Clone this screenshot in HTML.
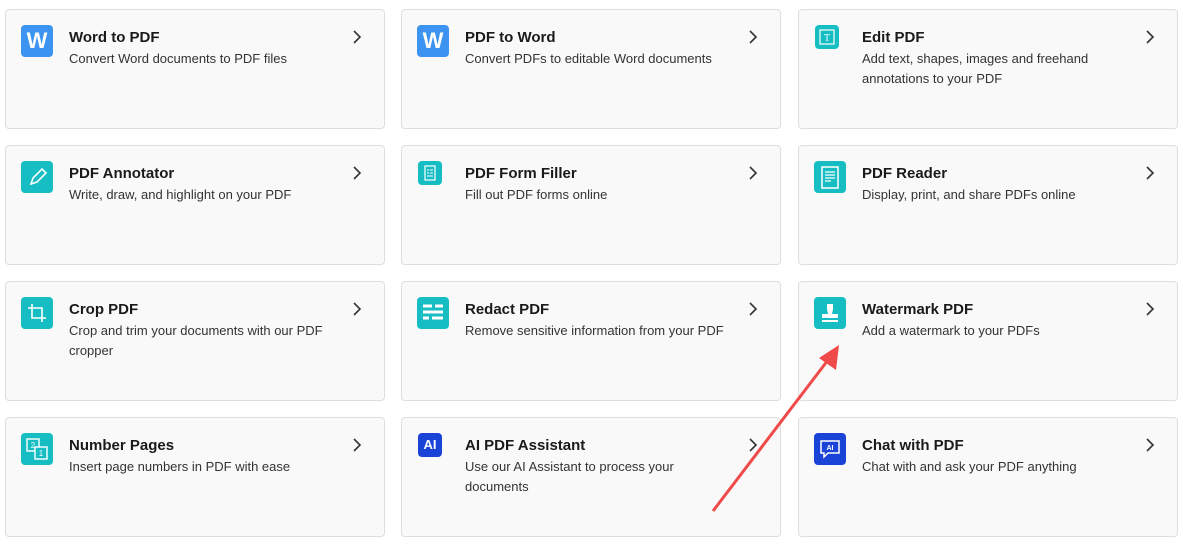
<!DOCTYPE html>
<html><head><meta charset="utf-8"><style>
*{box-sizing:border-box;margin:0;padding:0}
body{width:1192px;height:546px;background:#fff;font-family:"Liberation Sans",sans-serif;position:relative;overflow:hidden}
.card{position:absolute;width:380px;height:120px;background:#f9f9f9;border:1px solid #dedede;border-radius:4px}
.ic{position:absolute;left:15px;top:15px;width:32px;height:32px;border-radius:4px;background:#16bec3}
.t{position:absolute;left:63px;top:19px;font-size:15px;font-weight:bold;color:#1a1a1a}
.d{position:absolute;left:63px;top:39px;font-size:13px;line-height:20px;color:#333;width:270px}
.ch{position:absolute;right:22px;top:20px}
.w{background:#3d94f0;color:#fff;font-weight:bold;font-size:22px;text-align:center;line-height:32px}
</style></head><body>
<svg width="0" height="0" style="position:absolute"><defs><symbol id="chev" viewBox="0 0 10 14"><path d="M2 1l6 6-6 6" fill="none" stroke="#333" stroke-width="1.6"/></symbol></defs></svg>

<div class="card" style="left:5px;top:9px"><div class="ic w">W</div><div class="t">Word to PDF</div><div class="d">Convert Word documents to PDF files</div><svg class="ch" width="10" height="14"><use href="#chev"/></svg></div>
<div class="card" style="left:401px;top:9px"><div class="ic w">W</div><div class="t">PDF to Word</div><div class="d">Convert PDFs to editable Word documents</div><svg class="ch" width="10" height="14"><use href="#chev"/></svg></div>
<div class="card" style="left:798px;top:9px"><div class="ic" style="width:24px;height:24px;left:16px"><svg width="24" height="24"><rect x="5" y="5" width="14" height="14" fill="none" stroke="#fff" stroke-width="1.2"/><text x="12" y="16" font-size="10" fill="#fff" text-anchor="middle" font-family="Liberation Serif">T</text></svg></div><div class="t">Edit PDF</div><div class="d">Add text, shapes, images and freehand annotations to your PDF</div><svg class="ch" width="10" height="14"><use href="#chev"/></svg></div>

<div class="card" style="left:5px;top:145px"><div class="ic"><svg width="32" height="32"><path d="M10 23l2-6 9-9 4 4-9 9z M10 23l6-2" fill="none" stroke="#fff" stroke-width="1.6"/></svg></div><div class="t">PDF Annotator</div><div class="d">Write, draw, and highlight on your PDF</div><svg class="ch" width="10" height="14"><use href="#chev"/></svg></div>
<div class="card" style="left:401px;top:145px"><div class="ic" style="width:24px;height:24px;left:16px"><svg width="24" height="24"><rect x="7" y="5" width="10" height="14" fill="none" stroke="#fff" stroke-width="1.2"/><path d="M9 9h2M12 9h3M9 12h2M12 12h3M9 15h6" stroke="#fff"/></svg></div><div class="t">PDF Form Filler</div><div class="d">Fill out PDF forms online</div><svg class="ch" width="10" height="14"><use href="#chev"/></svg></div>
<div class="card" style="left:798px;top:145px"><div class="ic"><svg width="32" height="32"><rect x="8" y="6" width="16" height="21" fill="none" stroke="#fff" stroke-width="1.5"/><path d="M11 11h10M11 14h10M11 17h10M11 20h6" stroke="#fff" stroke-width="1.3"/></svg></div><div class="t">PDF Reader</div><div class="d">Display, print, and share PDFs online</div><svg class="ch" width="10" height="14"><use href="#chev"/></svg></div>

<div class="card" style="left:5px;top:281px"><div class="ic"><svg width="32" height="32"><path d="M11 7v14h14M7 11h14v14" fill="none" stroke="#fff" stroke-width="1.6"/></svg></div><div class="t">Crop PDF</div><div class="d">Crop and trim your documents with our PDF cropper</div><svg class="ch" width="10" height="14"><use href="#chev"/></svg></div>
<div class="card" style="left:401px;top:281px"><div class="ic"><svg width="32" height="32"><path d="M6 9h9M18 9h8M6 15h20M6 21h6M15 21h11" stroke="#fff" stroke-width="3"/></svg></div><div class="t">Redact PDF</div><div class="d">Remove sensitive information from your PDF</div><svg class="ch" width="10" height="14"><use href="#chev"/></svg></div>
<div class="card" style="left:798px;top:281px"><div class="ic"><svg width="32" height="32"><path d="M13 7h6v5l-1 5h6v4H8v-4h6l-1-5z" fill="#fff"/><rect x="8" y="23" width="16" height="2" fill="#fff"/></svg></div><div class="t">Watermark PDF</div><div class="d">Add a watermark to your PDFs</div><svg class="ch" width="10" height="14"><use href="#chev"/></svg></div>

<div class="card" style="left:5px;top:417px"><div class="ic"><svg width="32" height="32"><rect x="6" y="6" width="12" height="12" fill="none" stroke="#fff" stroke-width="1.4"/><rect x="14" y="14" width="12" height="12" fill="#16bec3" stroke="#fff" stroke-width="1.4"/><text x="12" y="15" font-size="8" fill="#fff" text-anchor="middle">2</text><text x="20" y="23" font-size="8" fill="#fff" text-anchor="middle">1</text></svg></div><div class="t">Number Pages</div><div class="d">Insert page numbers in PDF with ease</div><svg class="ch" width="10" height="14"><use href="#chev"/></svg></div>
<div class="card" style="left:401px;top:417px"><div class="ic" style="width:24px;height:24px;left:16px;background:#1a44d8;color:#fff;font-weight:bold;font-size:13px;text-align:center;line-height:24px">AI</div><div class="t">AI PDF Assistant</div><div class="d" style="width:235px">Use our AI Assistant to process your documents</div><svg class="ch" width="10" height="14"><use href="#chev"/></svg></div>
<div class="card" style="left:798px;top:417px"><div class="ic" style="background:#1a44d8"><svg width="32" height="32"><path d="M7 8h18v12H14l-4 4v-4H7z" fill="none" stroke="#fff" stroke-width="1.5"/><text x="16" y="17" font-size="7" fill="#fff" text-anchor="middle" font-weight="bold">AI</text></svg></div><div class="t">Chat with PDF</div><div class="d">Chat with and ask your PDF anything</div><svg class="ch" width="10" height="14"><use href="#chev"/></svg></div>

<svg style="position:absolute;left:0;top:0" width="1192" height="546"><line x1="713" y1="511" x2="828" y2="360" stroke="#f04a4a" stroke-width="3"/><path d="M839 345l-3 25-17-12z" fill="#f04a4a"/></svg>
</body></html>
